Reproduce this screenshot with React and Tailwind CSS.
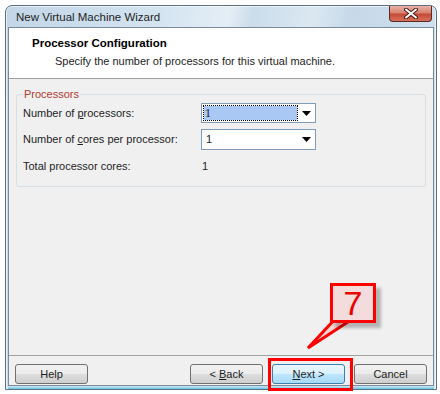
export default function App() {
  const font = { fontFamily: '"Liberation Sans", Arial, sans-serif' };
  return (
    <div className="relative w-[440px] h-[394px] bg-white overflow-hidden" style={font}>
      <div className="ml-[5px] mt-[5px] w-[432px] h-[385px] flex flex-col rounded-t-[7px] border border-[#5f6f7e] bg-[linear-gradient(100deg,#c3d6e7_0%,#d3e3f0_30%,#e4eef6_45%,#cbdcea_50%,#dbe8f2_62%,#c6d9e9_70%,#d6e5f1_100%)] shadow-[0_0_0_1px_rgba(255,255,255,0.6)_inset]">
        {/* title bar */}
        <div className="h-[21px] flex items-start shrink-0">
          <div className="pl-[10px] pt-[4px] text-[11.5px] leading-[15px] text-[#1e1e1e]">New Virtual Machine Wizard</div>
          <div className="ml-auto mr-[4px] w-[43px] h-[16px] rounded-b-[4px] border border-t-0 border-[#5b2a22] bg-[linear-gradient(180deg,#eab3a6_0%,#d98270_45%,#c44a36_55%,#d9705a_100%)] flex items-center justify-center">
            <svg width="14" height="11" viewBox="0 0 14 11">
              <path d="M2 1.5 L12 9.5 M12 1.5 L2 9.5" stroke="#4a1f18" strokeWidth="4" strokeLinecap="round" />
              <path d="M2 1.5 L12 9.5 M12 1.5 L2 9.5" stroke="#ffffff" strokeWidth="2" strokeLinecap="round" />
            </svg>
          </div>
        </div>
        {/* client area */}
        <div className="mx-[2px] flex-1 flex flex-col border border-[#7a8a98] bg-[#f0f0f0] text-[11px] text-[#1e1e1e]">
          <div className="h-[51px] bg-white border-b border-[#a0a0a0] shrink-0 pt-[8px]">
            <div className="pl-[23px] font-bold leading-[15px] text-[11.5px] text-[#000]">Processor Configuration</div>
            <div className="pl-[46px] leading-[15px] mt-[3px]">Specify the number of processors for this virtual machine.</div>
          </div>
          <div className="flex-1 px-[7px] pt-[8px]">
            <fieldset className="border border-[#d5dfe5] rounded-[3px] px-[6px] pb-[10px]">
              <legend className="px-[1px] text-[#b23b32] leading-[14px]">Processors</legend>
              <div className="flex flex-col gap-[6px] pt-[2px]">
                <div className="flex items-center h-[20px]">
                  <div className="w-[178px]">Number of <span className="underline">p</span>rocessors:</div>
                  <div className="w-[115px] h-[20px] bg-white border border-[#7f9db9] flex items-center pl-[2px] pr-[4px]">
                    <div className="w-[93px] h-[14px] bg-[#a9c8f3] outline outline-1 outline-dotted outline-[#000] text-[12px] leading-[14px] pl-[1px] text-[#1e1e1e]" style={{ fontFamily: '"Liberation Serif", serif' }}>1</div>
                    <svg className="ml-auto" width="9" height="5" viewBox="0 0 9 5"><path d="M0 0 H9 L4.5 5 Z" fill="#000" /></svg>
                  </div>
                </div>
                <div className="flex items-center h-[21px]">
                  <div className="w-[178px]">Number of <span className="underline">c</span>ores per processor:</div>
                  <div className="w-[115px] h-[21px] bg-white border border-[#7f9db9] flex items-center pl-[4px] pr-[4px]">
                    <span>1</span>
                    <svg className="ml-auto" width="9" height="5" viewBox="0 0 9 5"><path d="M0 0 H9 L4.5 5 Z" fill="#000" /></svg>
                  </div>
                </div>
                <div className="flex items-center h-[20px]">
                  <div className="w-[179px]">Total processor cores:</div>
                  <div>1</div>
                </div>
              </div>
            </fieldset>
          </div>
          <div className="h-[30px] shrink-0 border-t border-[#a0a0a0] flex items-start pt-[8px] px-[6px]">
            <Btn>Help</Btn>
            <div className="ml-auto flex gap-[9px]">
              <Btn>&lt; <span className="underline">B</span>ack</Btn>
              <Btn primary><span className="underline">N</span>ext &gt;</Btn>
              <Btn>Cancel</Btn>
            </div>
          </div>
        </div>
        <div className="h-[3px] mx-[2px] shrink-0 bg-[linear-gradient(180deg,#d6e5f1_0%,#5fc7e8_100%)]" />
      </div>

      {/* annotation overlay */}
      <div className="absolute left-[268px] top-[358px] w-[85px] h-[33px] border-[3px] border-[#ff0000]" />
      <svg className="absolute left-0 top-0" width="440" height="394" viewBox="0 0 440 394">
        <polygon points="336,318 354,318 308,348" fill="#f5d6d6" stroke="#ff0000" strokeWidth="3" strokeLinejoin="miter" />
      </svg>
      <div className="absolute left-[330px] top-[283px] w-[46px] h-[40px] border-[3px] border-[#ff0000] bg-[#f5dcdc] shadow-[5px_5px_3px_rgba(0,0,0,0.25)] flex items-center justify-center text-[34px] leading-none text-[#ee0000]" style={{ fontFamily: '"Liberation Sans", sans-serif' }}>7</div>
    </div>
  );
}

function Btn({ children, primary }) {
  return (
    <div
      className={
        "w-[73px] h-[20px] rounded-[3px] border flex items-center justify-center text-[11px] leading-none text-[#1e1e1e] " +
        (primary
          ? "border-[#3c7fb1] bg-[linear-gradient(180deg,#eaf6fd_0%,#d9f0fc_50%,#bee6fd_51%,#a7d9f5_100%)]"
          : "border-[#707070] bg-[linear-gradient(180deg,#f2f2f2_0%,#ebebeb_50%,#dddddd_51%,#cfcfcf_100%)]")
      }
    >
      <span>{children}</span>
    </div>
  );
}
